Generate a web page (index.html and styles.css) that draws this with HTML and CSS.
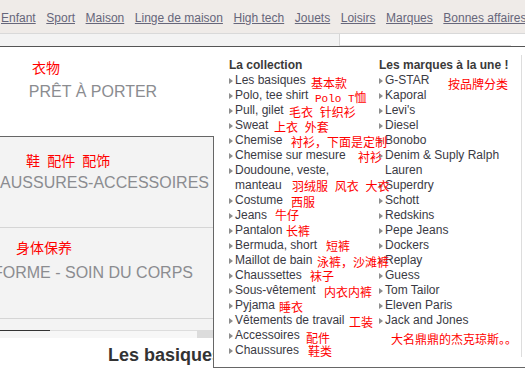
FILE: index.html
```
<!DOCTYPE html>
<html lang="fr">
<head>
<meta charset="utf-8">
<title>Menu</title>
<link rel="stylesheet" href="styles.css">
</head>
<body>
<nav class="topnav">
  <a href="#">Enfant</a>
  <a href="#">Sport</a>
  <a href="#">Maison</a>
  <a href="#">Linge de maison</a>
  <a href="#">High tech</a>
  <a href="#">Jouets</a>
  <a href="#">Loisirs</a>
  <a href="#">Marques</a>
  <a href="#">Bonnes affaires</a>
</nav>
<div class="subbar">
  <div class="subbar-left"></div>
  <div class="subbar-right"></div>
</div>
<div class="main">
  <aside class="cats">
    <div class="cat cat-plain"><span class="cat-label">PRÊT À PORTER</span></div>
    <div class="cat cat-open cat-open-first"><span class="cat-label">CHAUSSURES-ACCESSOIRES</span></div>
    <div class="cat cat-open"><span class="cat-label">FORME - SOIN DU CORPS</span></div>
    <div class="cat-rest"></div>
    <div class="scrollbar">
      <div class="scroll-thumb"></div>
      <div class="scroll-track"></div>
      <div class="scroll-btn"></div>
    </div>
    <h2 class="page-title">Les basiques</h2>
  </aside>
  <div class="dropdown">
    <div class="dd-col dd-col-1">
      <h3>La collection</h3>
      <ul>
        <li><span>Les basiques</span></li>
        <li><span>Polo, tee shirt</span></li>
        <li><span>Pull, gilet</span></li>
        <li><span>Sweat</span></li>
        <li><span>Chemise</span></li>
        <li><span>Chemise sur mesure</span></li>
        <li><span>Doudoune, veste, manteau</span></li>
        <li><span>Costume</span></li>
        <li><span>Jeans</span></li>
        <li><span>Pantalon</span></li>
        <li><span>Bermuda, short</span></li>
        <li><span>Maillot de bain</span></li>
        <li><span>Chaussettes</span></li>
        <li><span>Sous-vêtement</span></li>
        <li><span>Pyjama</span></li>
        <li><span>Vêtements de travail</span></li>
        <li><span>Accessoires</span></li>
        <li><span>Chaussures</span></li>
      </ul>
    </div>
    <div class="dd-col dd-col-2">
      <h3>Les marques à la une !</h3>
      <ul>
        <li><span>G-STAR</span></li>
        <li><span>Kaporal</span></li>
        <li><span>Levi's</span></li>
        <li><span>Diesel</span></li>
        <li><span>Bonobo</span></li>
        <li><span>Denim &amp; Suply Ralph Lauren</span></li>
        <li><span>Superdry</span></li>
        <li><span>Schott</span></li>
        <li><span>Redskins</span></li>
        <li><span>Pepe Jeans</span></li>
        <li><span>Dockers</span></li>
        <li><span>Replay</span></li>
        <li><span>Guess</span></li>
        <li><span>Tom Tailor</span></li>
        <li><span>Eleven Paris</span></li>
        <li><span>Jack and Jones</span></li>
      </ul>
    </div>
    <div class="dd-col-3"></div>
  </div>
</div>

<div class="notes">
  <span class="note note-lg" style="left:32px;top:59px">衣物</span>
  <span class="note note-lg" style="left:26px;top:152px">鞋 配件 配饰</span>
  <span class="note note-lg" style="left:16px;top:239px">身体保养</span>
  <span class="note" style="left:311px;top:76px">基本款</span>
  <span class="note" style="left:315px;top:90px"><span class="note-latin">Polo T</span>恤</span>
  <span class="note" style="left:289px;top:105px">毛衣 针织衫</span>
  <span class="note" style="left:274px;top:120px">上衣 外套</span>
  <span class="note" style="left:291px;top:135px">衬衫，下面是定制</span>
  <span class="note" style="left:358px;top:150px">衬衫</span>
  <span class="note" style="left:292px;top:179px">羽绒服 风衣 大衣</span>
  <span class="note" style="left:291px;top:195px">西服</span>
  <span class="note" style="left:275px;top:208px">牛仔</span>
  <span class="note" style="left:286px;top:224px">长裤</span>
  <span class="note" style="left:326px;top:239px">短裤</span>
  <span class="note" style="left:317px;top:255px">泳裤，沙滩裤</span>
  <span class="note" style="left:310px;top:269px">袜子</span>
  <span class="note" style="left:324px;top:285px">内衣内裤</span>
  <span class="note" style="left:279px;top:300px">睡衣</span>
  <span class="note" style="left:349px;top:315px">工装</span>
  <span class="note" style="left:306px;top:331px">配件</span>
  <span class="note" style="left:308px;top:344px">鞋类</span>
  <span class="note" style="left:448px;top:77px">按品牌分类</span>
  <span class="note" style="left:391px;top:332px">大名鼎鼎的杰克琼斯。。</span>
</div>
</body>
</html>
```

FILE: styles.css
```
* {
  box-sizing: border-box;
}

html, body {
  margin: 0;
  padding: 0;
}

body {
  width: 525px;
  height: 375px;
  overflow: hidden;
  position: relative;
  background: #ffffff;
  font-family: "Liberation Sans", Arial, sans-serif;
  color: #333333;
}

/* ---------- top navigation ---------- */
.topnav {
  height: 34px;
  background: #efebe8;
  border-bottom: 1px solid #d9d9d9;
  display: flex;
  gap: 10.6px;
  padding: 11px 0 0 1px;
  white-space: nowrap;
  overflow: hidden;
}

.topnav a {
  font-size: 12px;
  line-height: 14px;
  color: #66667a;
  text-decoration: underline;
  flex: none;
}

/* ---------- sub bar ---------- */
.subbar {
  height: 13px;
  display: flex;
  border-bottom: 1px solid #555555;
}

.subbar-left {
  width: 340px;
  background: #f3f3f3;
  border-right: 1px solid #d6d6d6;
}

.subbar-right {
  width: 171px;
  border-bottom: 1px solid #dddddd;
}

/* ---------- main ---------- */
.main {
  display: flex;
  height: 321px;
}

.cats {
  width: 213px;
  flex: none;
  display: flex;
  flex-direction: column;
  overflow: hidden;
}

.cat {
  flex: none;
}

.cat-label {
  display: block;
  width: 240px;
  margin-left: -27px;
  text-align: center;
  white-space: nowrap;
  font-size: 16px;
  line-height: 20px;
  color: #8b8c90;
}

.cat-plain {
  height: 89px;
  padding-top: 35px;
}

.cat-open {
  background: #f3f3f3;
  height: 91px;
  padding-top: 35px;
  border-bottom: 1px solid #d5d5d5;
}

.cat-open-first {
  height: 92px;
  border-top: 1px solid #666666;
  padding-top: 36px;
}

.cat-rest {
  height: 11px;
  background: #f3f3f3;
  flex: none;
}

.scrollbar {
  height: 8px;
  display: flex;
  flex: none;
}

.scroll-thumb {
  width: 50px;
  border-top: 1px solid #333333;
  background: #f5f5f5;
}

.scroll-track {
  flex: 1;
  border-top: 1px solid #dddddd;
  background: #f7f7f7;
}

.scroll-btn {
  width: 16px;
  background: #dcdcdc;
}

.page-title {
  margin: 6px 0 0 108px;
  font-size: 18px;
  line-height: 22px;
  font-weight: bold;
  color: #333333;
  white-space: nowrap;
}

/* ---------- dropdown ---------- */
.dropdown {
  flex: 1;
  position: relative;
  display: flex;
  padding-left: 16px;
  background: #ffffff;
  border-bottom: 1px solid #666666;
}

.dropdown::before {
  content: "";
  position: absolute;
  left: 0;
  top: 89px;
  bottom: -1px;
  width: 1px;
  background: #666666;
}

.dd-col {
  padding-top: 11px;
  flex: none;
}

.dd-col-1 {
  width: 140px;
  margin-right: 10px;
}

.dd-col-2 {
  width: 136px;
  margin-right: 6px;
}

.dd-col-3 {
  flex: 1;
  margin-top: 8px;
  height: 302px;
  border-left: 1px solid #dddddd;
}

.dd-col h3 {
  margin: 0;
  font-size: 12px;
  line-height: 15px;
  font-weight: bold;
  color: #3a3a3a;
  white-space: nowrap;
}

.dd-col ul {
  list-style: none;
  margin: 0;
  padding: 0;
}

.dd-col li {
  display: flex;
  font-size: 12px;
  line-height: 15px;
  color: #3a3a44;
}

.dd-col li::before {
  content: "";
  flex: none;
  width: 0;
  height: 0;
  margin-top: 5px;
  margin-right: 2px;
  border-left: 4px solid #8c8c8c;
  border-top: 3px solid transparent;
  border-bottom: 3px solid transparent;
}

/* ---------- red annotations ---------- */
.note {
  position: absolute;
  color: #ff0000;
  font-family: "Noto Sans CJK SC", "Noto Sans CJK JP", sans-serif;
  font-size: 12px;
  line-height: 14px;
  white-space: nowrap;
  word-spacing: 4px;
}

.note-lg {
  font-size: 14px;
  line-height: 16px;
}

.note-latin {
  font-family: "Liberation Mono", monospace;
  font-size: 11px;
  word-spacing: 0;
}
```
